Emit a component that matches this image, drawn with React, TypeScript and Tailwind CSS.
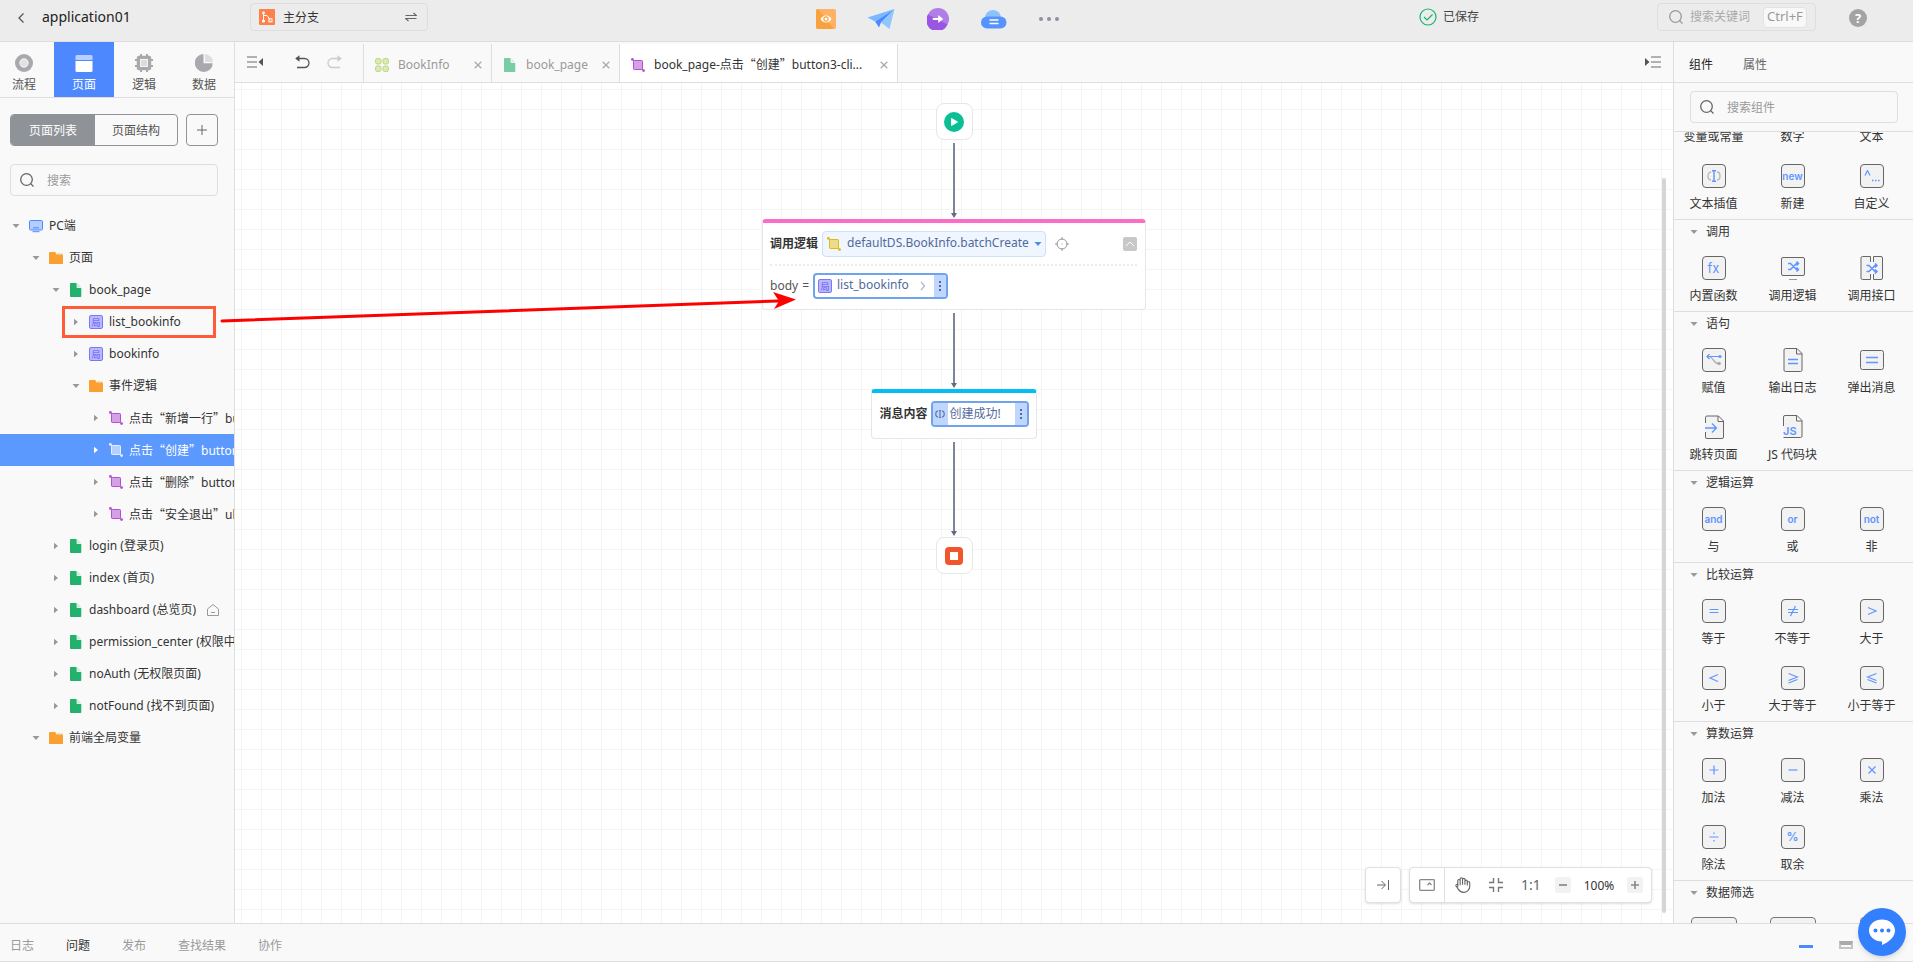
import { useState } from "react";
import type { ReactNode } from "react";
import clsx from "clsx";

/* ---------- shared icons ---------- */

function SearchIcon({ className }: { className?: string }) {
  return (
    <svg viewBox="0 0 16 16" fill="none" stroke="currentColor" strokeWidth="1.3" className={clsx("w-4 h-4 shrink-0", className)}>
      <circle cx="7.5" cy="7.5" r="5.8" />
      <path d="M11.6 11.6 14.5 14.5" />
    </svg>
  );
}

function PageIcon({ className }: { className?: string }) {
  return (
    <svg viewBox="0 0 14 14" className={clsx("w-3.5 h-3.5 shrink-0", className)}>
      <path d="M8.3 0 12.3 4.5H8.3Z" fill="#c5ead8" />
      <path d="M1.8 0H7.6V4a1 1 0 0 0 1 1h3.7v8.2a.8.8 0 0 1-.8.8H1.8a.8.8 0 0 1-.8-.8V.8A.8.8 0 0 1 1.8 0Z" fill="#23b26d" />
    </svg>
  );
}

function FolderIcon() {
  return (
    <svg viewBox="0 0 14 14" className="w-3.5 h-3.5 shrink-0">
      <path d="M8 2.2h5a.8.8 0 0 1 .8.8v3H8Z" fill="#fdd09a" />
      <path d="M.8 1h5.4l1.6 2.7h5.4a.8.8 0 0 1 .8.8v7.7a.8.8 0 0 1-.8.8H.8a.8.8 0 0 1-.8-.8V1.8A.8.8 0 0 1 .8 1Z" fill="#fb9f31" />
    </svg>
  );
}

function ScreenIcon() {
  return (
    <svg viewBox="0 0 14 14" className="w-3.5 h-3.5 shrink-0">
      <rect x=".5" y="1.5" width="13" height="9.5" rx="1.2" fill="#b3cdff" stroke="#4d88ff" />
      <path d="M4 8.8h6M3.5 12.7h7" stroke="#4d88ff" />
    </svg>
  );
}

function LogicIcon({ tone = "purple", className }: { tone?: "purple" | "yellow" | "white"; className?: string }) {
  const colors = {
    purple: ["#b14fd3", "#d5a0e6"],
    yellow: ["#e0b911", "#eedb85"],
    white: ["#e6efff", "#b4d0ff"],
  }[tone];
  return (
    <svg viewBox="0 0 14 14" className={clsx("w-3.5 h-3.5 shrink-0", className)}>
      <rect x="2.5" y="2.5" width="9" height="9" rx=".8" fill={colors[1]} stroke={colors[0]} />
      <path d="M1 1l2 2M11 11l2 2" stroke={colors[0]} />
      <circle cx="1.4" cy="1.4" r="1.4" fill={colors[0]} />
      <circle cx="12.6" cy="12.6" r="1.4" fill={colors[0]} />
    </svg>
  );
}

function LocalIcon() {
  return (
    <span className="flex items-center justify-center w-3.5 h-3.5 shrink-0 rounded-xs border border-[#7b77fb] bg-[#bbb8ff] text-[9px] leading-none text-[#5f5bf0]">
      局
    </span>
  );
}

function Caret({ open, className }: { open?: boolean; className?: string }) {
  return (
    <svg viewBox="0 0 8 8" fill="currentColor" className={clsx("w-2 h-2 shrink-0", className)}>
      {open ? <path d="M.5 2h7L4 6Z" /> : <path d="M2 .8v6.4L6 4Z" />}
    </svg>
  );
}

function CloseIcon() {
  return (
    <svg viewBox="0 0 8 8" stroke="currentColor" strokeWidth="1.3" className="w-2 h-2">
      <path d="M.7.7 7.3 7.3M7.3.7.7 7.3" />
    </svg>
  );
}

/* ---------- header ---------- */

function Header() {
  return (
    <header className="flex items-start h-[42px] shrink-0 bg-[#ececec] border-b border-[#dcdcdc]">
      <div className="flex flex-1 items-start">
        <button aria-label="返回" className="ml-4 mt-3 text-[#555]">
          <svg viewBox="0 0 12 12" fill="none" stroke="currentColor" strokeWidth="1.3" className="w-3 h-3">
            <path d="M7.5 1.5 3 6l4.5 4.5" />
          </svg>
        </button>
        <h1 className="ml-3.5 mt-[7px] w-52 text-sm text-[#222]">application01</h1>
        <button className="flex items-center mt-[3px] w-[178px] h-7 px-2 rounded border border-[#dedede] text-[#333]">
          <svg viewBox="0 0 16 16" className="w-4 h-4">
            <rect width="16" height="16" rx="1" fill="#ff8048" />
            <g fill="none" stroke="#fff">
              <path d="M4.5 4v8M4.5 6.5h3.5l3 4" />
              <rect x="10" y="9.8" width="3" height="3" />
            </g>
            <circle cx="4.5" cy="4" r="1.4" fill="#fff" />
            <circle cx="4.5" cy="12" r="1.6" fill="#fff" />
          </svg>
          <span className="ml-2 mr-auto pt-0.5">主分支</span>
          <svg viewBox="0 0 12 10" fill="none" stroke="#666" strokeWidth="1.2" className="w-3 h-2.5 mr-0.5">
            <path d="M.5 3.5h11L8.5 1M11.5 6.5H.5L3.5 9" />
          </svg>
        </button>
      </div>

      <div className="flex items-center h-[38px] pr-[38px]">
        <button aria-label="预览">
          <svg viewBox="0 0 20 20" className="w-5 h-5">
            <rect width="20" height="20" rx="2" fill="#ffb266" />
            <path d="M2 0 18 20H2a2 2 0 0 1-2-2V2a2 2 0 0 1 2-2Z" fill="#f7a23c" />
            <path d="M4.5 10c2.5-4.7 8.500-4.7 11 0-2.5 4.7-8.5 4.7-11 0Z" fill="#fff" />
            <circle cx="10" cy="10" r="2.1" fill="none" stroke="#f7a23c" strokeWidth="1.2" />
          </svg>
        </button>
        <button aria-label="发布" className="ml-[31px]">
          <svg viewBox="0 0 28 22" className="w-7 h-[22px]">
            <path d="M27.5 1 .5 9.5l7.7 4Z" fill="#7ab8ff" />
            <path d="M27.5 1 8.2 13.5 12 19.5l2-5Z" fill="#4d88ff" />
            <path d="M27.5 1 14 14.5l8.5 6.5Z" fill="#8fc6ff" />
          </svg>
        </button>
        <button aria-label="导出" className="ml-8">
          <svg viewBox="0 0 22 22" className="w-[22px] h-[22px]">
            <circle cx="11" cy="11" r="11" fill="#b07ee6" />
            <path d="M1 6.5 20.5 16.5A11 11 0 1 1 1 6.5Z" fill="#9a55e2" />
            <path d="M5.8 10h5.4V7l5 4-5 4v-3H5.8Z" fill="#fff" />
          </svg>
        </button>
        <button aria-label="云服务" className="ml-8">
          <svg viewBox="0 0 26 20" className="w-[26px] h-5">
            <circle cx="12" cy="9" r="8" fill="#8cc3ff" />
            <rect y="7.5" width="25.5" height="12" rx="6" fill="#5593ff" />
            <path d="M8.5 11h9M8.5 14.5h9" stroke="#fff" strokeWidth="1.6" />
          </svg>
        </button>
        <button aria-label="更多" className="flex gap-1 ml-8">
          <span className="w-1 h-1 rounded-full bg-[#8b92a3]" />
          <span className="w-1 h-1 rounded-full bg-[#8b92a3]" />
          <span className="w-1 h-1 rounded-full bg-[#8b92a3]" />
        </button>
      </div>

      <div className="flex flex-1 items-start justify-end">
        <div className="flex items-center gap-1.5 mt-2 mr-[178px] text-[#444]">
          <svg viewBox="0 0 18 18" fill="none" stroke="#18b36b" strokeWidth="1.2" className="w-[18px] h-[18px]">
            <circle cx="9" cy="9" r="8" />
            <path d="m5 9 3 3 5.5-5.5" />
          </svg>
          已保存
        </div>
        <label className="flex items-center mt-[3px] w-[159px] h-7 px-2.5 rounded border border-[#dedede] text-[#999]">
          <SearchIcon />
          <input aria-label="搜索关键词" placeholder="搜索关键词" className="w-[73px] ml-1.5 bg-transparent outline-none placeholder:text-[#aaa]" />
          <kbd className="flex items-center h-[21px] px-[3px] rounded border border-[#e2e2e2] bg-[#f8f8f8] font-[inherit] text-[13px]">Ctrl+F</kbd>
        </label>
        <button aria-label="帮助" className="flex items-center justify-center w-[18px] h-[18px] mt-[9px] ml-[33px] mr-[46px] rounded-full bg-[#a3a3a3] text-[13px] font-bold leading-none text-white">
          ?
        </button>
      </div>
    </header>
  );
}

/* ---------- left sidebar ---------- */

const sideTabs: { label: string; icon: ReactNode }[] = [
  {
    label: "流程",
    icon: (
      <>
        <circle cx="9" cy="9" r="9" fill="#a8a9ac" />
        <circle cx="9" cy="9" r="4.2" fill="#e2e2e2" stroke="#fff" strokeWidth=".8" />
      </>
    ),
  },
  {
    label: "页面",
    icon: (
      <>
        <path d="M2 1h14a1.5 1.5 0 0 1 1.5 1.5V6H.5V2.5A1.5 1.5 0 0 1 2 1Z" fill="#b8d0ff" />
        <path d="M.5 7h17v9.5a1.5 1.5 0 0 1-1.5 1.5H2a1.5 1.5 0 0 1-1.5-1.5Z" fill="#fff" />
      </>
    ),
  },
  {
    label: "逻辑",
    icon: (
      <>
        <path d="M6 0v18M12 0v18M0 6h18M0 12h18" stroke="#a8a9ac" strokeWidth="2" />
        <rect x="1.8" y="1.8" width="14.4" height="14.4" rx="2" fill="#a8a9ac" />
        <rect x="5.5" y="5.5" width="7" height="7" fill="#dcdcdc" stroke="#f5f5f5" />
      </>
    ),
  },
  {
    label: "数据",
    icon: (
      <>
        <path d="M8.5 0A9 9 0 1 0 17.8 9.3H8.5Z" fill="#a8a9ac" />
        <path d="M10 0a8.5 8.5 0 0 1 8 8h-8Z" fill="#dedede" />
      </>
    ),
  },
];

type TreeNode = {
  level: number;
  icon: "screen" | "folder" | "page" | "local" | "logic";
  text: ReactNode;
  open?: boolean;
  active?: boolean;
  marked?: boolean;
  home?: boolean;
};

// quotes take a full cell in the CJK face
function EventName({ name, target }: { name: string; target: string }) {
  return (
    <>
      <span className="font-['Noto_Sans_CJK_SC',sans-serif]">点击“{name}”</span>
      {target}
    </>
  );
}

const tree: TreeNode[] = [
  { level: 0, icon: "screen", text: "PC端", open: true },
  { level: 1, icon: "folder", text: "页面", open: true },
  { level: 2, icon: "page", text: "book_page", open: true },
  { level: 3, icon: "local", text: "list_bookinfo", marked: true },
  { level: 3, icon: "local", text: "bookinfo" },
  { level: 3, icon: "folder", text: "事件逻辑", open: true },
  { level: 4, icon: "logic", text: <EventName name="新增一行" target="bu" /> },
  { level: 4, icon: "logic", text: <EventName name="创建" target="button" />, active: true },
  { level: 4, icon: "logic", text: <EventName name="删除" target="button" /> },
  { level: 4, icon: "logic", text: <EventName name="安全退出" target="ul" /> },
  { level: 2, icon: "page", text: "login (登录页)" },
  { level: 2, icon: "page", text: "index (首页)" },
  { level: 2, icon: "page", text: "dashboard (总览页)", home: true },
  { level: 2, icon: "page", text: "permission_center (权限中" },
  { level: 2, icon: "page", text: "noAuth (无权限页面)" },
  { level: 2, icon: "page", text: "notFound (找不到页面)" },
  { level: 1, icon: "folder", text: "前端全局变量", open: true },
];

const indents = ["pl-3", "pl-8", "pl-[52px]", "pl-[72px]", "pl-[92px]"];

function TreeRow({ node }: { node: TreeNode }) {
  return (
    <li className="relative">
      <button
        className={clsx(
          "flex items-center w-full h-8 overflow-hidden whitespace-nowrap text-left",
          indents[node.level],
          node.active ? "bg-[#5c99ff] text-white" : "text-[#333]"
        )}
      >
        <Caret open={node.open} className={clsx("mr-[9px]", node.active ? "text-white" : "text-[#999]")} />
        {node.icon === "screen" && <ScreenIcon />}
        {node.icon === "folder" && <FolderIcon />}
        {node.icon === "page" && <PageIcon />}
        {node.icon === "local" && <LocalIcon />}
        {node.icon === "logic" && <LogicIcon tone={node.active ? "white" : "purple"} />}
        <span className="ml-1.5">{node.text}</span>
        {node.home && (
          <svg viewBox="0 0 14 14" fill="none" stroke="#999" className="w-3.5 h-3.5 ml-2.5 shrink-0">
            <path d="M1.5 6 7 1.5 12.5 6v6.5h-11ZM5 9.5h4" />
          </svg>
        )}
      </button>
      {node.marked && <span className="absolute top-0 left-[62px] w-[154px] h-8 border-3 border-[#ff5b38] pointer-events-none" />}
    </li>
  );
}

function Sidebar() {
  return (
    <aside className="flex flex-col w-[235px] shrink-0 bg-[#f9f9f9] border-r border-[#dedede]">
      <nav className="flex border-b border-[#dedede]">
        {sideTabs.map((tab, i) => (
          <button
            key={tab.label}
            className={clsx(
              "flex flex-col items-center h-[55px] pt-3",
              i === 0 ? "w-[54px] pr-1.5" : "w-15",
              i === 1 ? "bg-[#4d88ff] text-white" : "text-[#555]"
            )}
          >
            <svg viewBox="0 0 18 18" className="w-[18px] h-[18px]">
              {tab.icon}
            </svg>
            <span className="mt-[5px]">{tab.label}</span>
          </button>
        ))}
      </nav>

      <div className="flex gap-2 px-2.5 pt-4">
        <div className="flex w-[168px] h-8 rounded border border-[#8f9398] overflow-hidden">
          <button className="w-[84px] pt-px bg-[#8f9398] text-white">页面列表</button>
          <button className="flex-1 pt-px text-[#555]">页面结构</button>
        </div>
        <button aria-label="新建页面" className="flex items-center justify-center w-8 h-8 rounded border border-[#8f9398] text-[#666]">
          <svg viewBox="0 0 10 10" stroke="currentColor" className="w-2.5 h-2.5">
            <path d="M5 0v10M0 5h10" />
          </svg>
        </button>
      </div>

      <label className="flex items-center gap-3 h-8 mx-2.5 mt-[18px] w-[208px] px-2 rounded border border-[#dedede] text-[#666]">
        <SearchIcon />
        <input aria-label="搜索" placeholder="搜索" className="flex-1 min-w-0 pt-px bg-transparent outline-none placeholder:text-[#999]" />
      </label>

      <ul className="mt-3.5">
        {tree.map((node, i) => (
          <TreeRow key={i} node={node} />
        ))}
      </ul>
    </aside>
  );
}

/* ---------- editor ---------- */

function EditorBar() {
  return (
    <div className="flex items-end h-[41px] shrink-0 bg-[#f9f9f9] border-b border-[#dedede]">
      <div className="flex items-center self-stretch w-32 pl-3 text-[#666]">
        <button aria-label="收起左侧栏">
          <svg viewBox="0 0 16 14" className="w-4 h-3.5">
            <path d="M0 2h10M0 7h10M0 12h10" stroke="#999" strokeWidth="1.6" />
            <path d="M16 3v8L11.5 7Z" fill="#555" />
          </svg>
        </button>
        <button aria-label="撤销" className="ml-8">
          <svg viewBox="0 0 15 14" fill="none" stroke="#555" strokeWidth="1.3" className="w-[15px] h-3.5">
            <path d="M1 3.5h8.5a4.2 4.2 0 0 1 0 9H2" />
            <path d="M4.500.2v6.6L.2 3.5Z" fill="#555" stroke="none" />
          </svg>
        </button>
        <button aria-label="重做" className="ml-[17px]">
          <svg viewBox="0 0 15 14" fill="none" stroke="#ccc" strokeWidth="1.3" className="w-[15px] h-3.5">
            <path d="M14 3.5H5.5a4.2 4.2 0 0 0 0 9H13" />
            <path d="M10.500.2v6.6L14.8 3.5Z" fill="#ccc" stroke="none" />
          </svg>
        </button>
      </div>
      <div className="flex h-[38px] border-l border-[#dedede]">
        <div className="flex items-center w-32 pt-[3px] pl-[11px] pr-[9px] border-r border-[#dedede] text-[#999]">
          <svg viewBox="0 0 14 14" fill="#dbe9b8" stroke="#bcd57f" className="w-3.5 h-3.5">
            <rect x=".5" y=".5" width="5.5" height="5.5" rx="1.8" />
            <rect x="8" y=".5" width="5.5" height="5.5" rx="1.8" />
            <rect x=".5" y="8" width="5.5" height="5.5" rx="1.8" />
            <rect x="8" y="8" width="5.5" height="5.5" rx="1.8" />
          </svg>
          <span className="ml-[9px] mr-auto">BookInfo</span>
          <button aria-label="关闭 BookInfo" className="text-[#aaa]"><CloseIcon /></button>
        </div>
        <div className="flex items-center w-32 pt-[3px] pl-[11px] pr-[9px] border-r border-[#dedede] text-[#999]">
          <PageIcon className="opacity-60" />
          <span className="ml-[9px] mr-auto">book_page</span>
          <button aria-label="关闭 book_page" className="text-[#aaa]"><CloseIcon /></button>
        </div>
        <div className="flex items-center w-[278px] pt-[3px] pl-[11px] pr-[9px] border-r border-[#dedede] bg-white text-[#333]">
          <LogicIcon />
          <span className="ml-[9px] mr-auto whitespace-nowrap">
            book_page-<span className="font-['Noto_Sans_CJK_SC',sans-serif]">点击“创建”</span>button3-cli...
          </span>
          <button aria-label="关闭标签" className="text-[#aaa]"><CloseIcon /></button>
        </div>
      </div>
      <button aria-label="收起右侧栏" className="self-center ml-auto mr-3">
        <svg viewBox="0 0 16 14" className="w-4 h-3.5">
          <path d="M6 2h10M6 7h10M6 12h10" stroke="#999" strokeWidth="1.6" />
          <path d="M0 3v8L4.5 7Z" fill="#555" />
        </svg>
      </button>
    </div>
  );
}

function Arrow({ className }: { className: string }) {
  return (
    <div className={clsx("flex flex-col items-center mt-[3px] mb-px", className)}>
      <div className="flex-1 w-0.5 bg-[#7d8696]" />
      <svg viewBox="0 0 6 5" className="w-1.5 h-[5px]">
        <path d="M0 0h6L3 5Z" fill="#626b80" />
      </svg>
    </div>
  );
}

function Dots() {
  return (
    <span className="flex flex-col items-center justify-center gap-0.5 w-3 self-stretch bg-[#bfd7ff]">
      <span className="w-0.5 h-0.5 bg-[#516a9c]" />
      <span className="w-0.5 h-0.5 bg-[#516a9c]" />
      <span className="w-0.5 h-0.5 bg-[#516a9c]" />
    </span>
  );
}

function Canvas() {
  return (
    <div className="relative flex flex-1 flex-col items-center min-h-0 pt-5 overflow-hidden bg-white bg-[linear-gradient(#f4f4f4_1px,transparent_1px),linear-gradient(90deg,#f4f4f4_1px,transparent_1px)] bg-[size:20px_20px] bg-[position:6px_6px]">
      <div className="flex items-center justify-center w-[37px] h-[37px] rounded-lg border border-[#e6e6e6] bg-white">
        <svg viewBox="0 0 20 20" className="w-5 h-5">
          <circle cx="10" cy="10" r="10" fill="#0bbf95" />
          <path d="M7.5 6.5v7L13.5 10Z" fill="#fff" stroke="#fff" strokeLinejoin="round" />
        </svg>
      </div>
      <Arrow className="h-[75px]" />

      <section className="w-96 pl-[7px] pr-2 pt-2 pb-2.5 rounded border border-t-4 border-[#e6e6e6] border-t-[#fb6dc8] bg-white">
        <div className="flex items-center">
          <label htmlFor="logic" className="font-bold text-[#333]">调用逻辑</label>
          <div className="relative flex items-center ml-1">
            <LogicIcon tone="yellow" className="absolute left-[5px]" />
            <select
              id="logic"
              className="w-56 h-[26px] pl-6 pr-4 pb-0.5 appearance-none rounded border border-[#cfe0fb] bg-[#f0f6ff] text-[#516a9c] outline-none"
            >
              <option>defaultDS.BookInfo.batchCreate</option>
            </select>
            <Caret open className="absolute right-1 text-[#4a90e2]" />
          </div>
          <button aria-label="定位" className="ml-[9px]">
            <svg viewBox="0 0 14 14" fill="none" stroke="#999" className="w-3.5 h-3.5">
              <circle cx="7" cy="7" r="5" />
              <path d="M7 0v3M7 11v3M0 7h3M11 7h3M6.5 7h1" />
            </svg>
          </button>
          <button aria-label="收起" className="flex items-center justify-center w-3.5 h-3.5 ml-auto rounded-xs bg-[#c8c8c8]">
            <svg viewBox="0 0 10 6" fill="none" stroke="#fff" className="w-2.5 h-1.5">
              <path d="M.8 5 5 1l4.2 4" />
            </svg>
          </button>
        </div>
        <div className="my-[7px] border-t-2 border-dotted border-[#ebebeb]" />
        <div className="flex items-center text-[#555]">
          <span className="flex gap-1 w-[43px]">
            <span>body</span>
            <span>=</span>
          </span>
          <button className="flex items-center w-[135px] h-[26px] pl-[3px] rounded border-2 border-[#6fa3ee] bg-white overflow-hidden text-[#516a9c]">
            <LocalIcon />
            <span className="ml-[5px] mr-auto pb-0.5">list_bookinfo</span>
            <svg viewBox="0 0 6 10" fill="none" stroke="#a9b8d3" strokeWidth="1.3" className="w-1.5 h-2.5 mr-2">
              <path d="M1 .8 4.5 5 1 9.2" />
            </svg>
            <Dots />
          </button>
        </div>
      </section>
      <Arrow className="h-[75px]" />

      <section className="flex items-center gap-[3px] px-[7px] pt-2 pb-[11px] rounded border border-t-4 border-[#e6e6e6] border-t-[#05bdf5] bg-white">
        <span className="font-bold text-[#333]">消息内容</span>
        <button className="flex items-center w-[98px] h-[26px] rounded border-2 border-[#6fa3ee] bg-white overflow-hidden text-[#516a9c]">
          <span className="flex items-center justify-center w-[15px] self-stretch bg-[#bfd7ff]">
            <svg viewBox="0 0 10 8" fill="none" stroke="#6079ad" strokeWidth="1.2" className="w-2.5 h-2">
              <path d="M3 .8C0 1.5 0 6.5 3 7.2M7 .8c3 .7 3 5.7 0 6.4M5 0v8M4 .5h2M4 7.5h2" />
            </svg>
          </span>
          <span className="ml-0.5 mr-auto">创建成功!</span>
          <Dots />
        </button>
      </section>
      <Arrow className="h-[94px]" />
      <div className="flex items-center justify-center w-[37px] h-[37px] rounded-lg border border-[#e6e6e6] bg-white">
        <div className="w-[18px] h-[18px] rounded border-5 border-[#f2552c] bg-white" />
      </div>

      {/* scrollbar */}
      <div className="absolute top-[95px] bottom-2.5 right-[7px] w-1 rounded-full bg-[#d5d5d5]" />

      <CanvasTools />
    </div>
  );
}

function CanvasTools() {
  return (
    <div className="absolute bottom-5 right-[21px] flex gap-2 text-[#666]">
      <button aria-label="展开" className="flex items-center justify-center w-9 h-9 rounded border border-[#e0e0e0] bg-white shadow-sm">
        <svg viewBox="0 0 14 12" fill="none" stroke="currentColor" className="w-3.5 h-3">
          <path d="M1 6h8M5.5 2l4 4-4 4M12.5 1v10" />
        </svg>
      </button>
      <div className="flex items-center h-9 w-[243px] rounded border border-[#e0e0e0] bg-white shadow-sm">
        <button aria-label="缩略图" className="flex items-center justify-center w-[35px] h-full border-r border-[#e0e0e0]">
          <svg viewBox="0 0 16 12" fill="none" stroke="#888" strokeWidth="1.3" className="w-4 h-3">
            <rect x=".7" y=".7" width="14.6" height="10.6" rx=".8" />
            <path d="m8.5 6 2-2 2 2" />
          </svg>
        </button>
        <button aria-label="拖动" className="ml-2.5">
          <svg viewBox="0 0 24 24" fill="none" stroke="currentColor" strokeWidth="1.7" strokeLinecap="round" strokeLinejoin="round" className="w-4 h-4">
            <path d="M18.5 12V6.5a1.8 1.8 0 0 0-3.6 0M14.9 11V3.8a1.8 1.8 0 0 0-3.6 0V11M11.3 11V3a1.8 1.8 0 0 0-3.6 0v8.5M7.7 11V5.5a1.8 1.8 0 0 0-3.6 0V15" />
            <path d="M18.5 8.5a1.8 1.8 0 0 1 3.6 0V14a9 9 0 0 1-9 9c-4 0-6-1.5-8-4.5l-3.6-5a1.7 1.7 0 0 1 2.6-2" />
          </svg>
        </button>
        <button aria-label="适应画布" className="ml-[17px]">
          <svg viewBox="0 0 16 16" fill="none" stroke="#777" strokeWidth="1.4" className="w-4 h-4">
            <path d="M1 5.5H5.5V1M15 5.5H10.5V1M1 10.5H5.5V15M15 10.5H10.5V15" />
          </svg>
        </button>
        <button className="ml-[17px] w-[18px] text-sm leading-4">1:1</button>
        <button aria-label="缩小" className="flex items-center justify-center w-4 h-4 ml-4 rounded-xs bg-[#f2f2f2]">
          <span className="w-2 h-0.5 bg-[#999]" />
        </button>
        <span className="w-14 pt-px text-center text-[#333]">100%</span>
        <button aria-label="放大" className="flex items-center justify-center w-4 h-4 rounded-xs bg-[#f2f2f2]">
          <svg viewBox="0 0 8 8" stroke="#888" strokeWidth="1.6" className="w-2 h-2">
            <path d="M4 0v8M0 4h8" />
          </svg>
        </button>
      </div>
    </div>
  );
}

/* ---------- right panel ---------- */

const line = "#5f95ff";

function Tile({ children }: { children: ReactNode }) {
  return (
    <span className="flex items-center justify-center w-6 h-6 rounded border border-[#666] bg-[#f2f2f2] font-[Inter,sans-serif] text-[10px] leading-none font-semibold text-[#5f95ff]">
      {children}
    </span>
  );
}

function Sign({ d }: { d: string }) {
  return (
    <Tile>
      <svg viewBox="0 0 12 12" fill="none" stroke={line} strokeWidth="1.2" className="w-3 h-3">
        <path d={d} />
      </svg>
    </Tile>
  );
}

function Drawing({ children }: { children: ReactNode }) {
  return (
    <svg viewBox="0 0 24 24" fill="#f2f2f2" stroke="#666" className="w-6 h-6">
      {children}
    </svg>
  );
}

const shuffle = (
  <path d="M7 7.5h2.5l6 6H18M7 13.5h2.5l6-6H18M15.5 5.5l2 2-2 2M15.5 11.5l2 2-2 2" fill="none" stroke={line} strokeWidth="1.5" />
);

type Item = { label: string; icon: ReactNode };

const groups: { title?: string; items: Item[] }[] = [
  {
    items: [
      {
        label: "文本插值",
        icon: (
          <Tile>
            <svg viewBox="0 0 14 12" fill="none" className="w-3.5 h-3">
              <path d="M4 2C0 2 0 10 4 10M10 2c4 0 4 8 0 8" stroke="#b5b5b5" strokeWidth="1.3" />
              <path d="M7 1v10M5 .7h4M5 11.3h4" stroke={line} strokeWidth="1.4" />
            </svg>
          </Tile>
        ),
      },
      { label: "新建", icon: <Tile>new</Tile> },
      {
        label: "自定义",
        icon: (
          <Tile>
            <svg viewBox="0 0 16 12" fill="none" stroke={line} className="w-4 h-3">
              <path d="m1 5.5 2.5-5 2.5 5" strokeWidth="1.2" />
              <path d="M8 10.5h8" strokeWidth="1.5" strokeDasharray="1.5 1.5" />
            </svg>
          </Tile>
        ),
      },
    ],
  },
  {
    title: "调用",
    items: [
      { label: "内置函数", icon: <Tile><span className="text-[13px] font-normal">fx</span></Tile> },
      {
        label: "调用逻辑",
        icon: (
          <Drawing>
            <rect x=".5" y="1.5" width="23" height="18" rx="1.5" />
            <path d="M8 23.5h8" stroke="#999" />
            {shuffle}
          </Drawing>
        ),
      },
      {
        label: "调用接口",
        icon: (
          <Drawing>
            <path d="M10.5 6V.5h-8A1.5 1.5 0 0 0 1 2v20a1.5 1.5 0 0 0 1.5 1.5h8V18M13.5 6V.5H21A1.5 1.5 0 0 1 22.5 2v20a1.5 1.5 0 0 1-1.5 1.5h-7.5V18" />
            <g transform="translate(-.5 2)">{shuffle}</g>
          </Drawing>
        ),
      },
    ],
  },
  {
    title: "语句",
    items: [
      {
        label: "赋值",
        icon: (
          <Tile>
            <svg viewBox="0 0 16 12" fill="none" className="w-4 h-3">
              <path d="M3 2.5c4 0 4.5 7 9 7" stroke="#aaa" strokeWidth="1.2" />
              <circle cx="13" cy="9.5" r="1.8" fill="#aaa" />
              <path d="M13 2.5H1M3.5 0 1 2.5 3.5 5" stroke={line} strokeWidth="1.2" />
              <circle cx="14" cy="2.5" r="1.5" fill={line} />
            </svg>
          </Tile>
        ),
      },
      {
        label: "输出日志",
        icon: (
          <Drawing>
            <path d="M16 .5H4.5A1.5 1.5 0 0 0 3 2v20a1.5 1.5 0 0 0 1.5 1.5h15A1.5 1.5 0 0 0 21 22V5.5ZM15.5.5V6H21" />
            <path d="M7 11.5h10M7 15.5h10" stroke={line} strokeWidth="1.3" />
          </Drawing>
        ),
      },
      {
        label: "弹出消息",
        icon: (
          <Drawing>
            <rect x=".5" y="2.5" width="23" height="19" rx="2" />
            <path d="M6 9.5h12M6 14.5h12" stroke={line} strokeWidth="1.3" />
          </Drawing>
        ),
      },
      {
        label: "跳转页面",
        icon: (
          <Drawing>
            <path d="M3.5 8V2.5A1.5 1.5 0 0 1 5 1h11.5l5 5v16a1.5 1.5 0 0 1-1.5 1.5H5A1.5 1.5 0 0 1 3.5 22v-5M16 1v5.5h5.5" />
            <path d="M3 13h11M10 8.5l4.5 4.5-4.5 4.5" fill="none" stroke={line} strokeWidth="1.3" />
          </Drawing>
        ),
      },
      {
        label: "JS 代码块",
        icon: (
          <Drawing>
            <path d="M2.5 11V2A1.5 1.5 0 0 1 4 .5h12l5 5V21a1.5 1.5 0 0 1-1.5 1.5H2.5M15.5.5V6H21" />
            <text x="2" y="20" fontSize="11" fontWeight="600" fontFamily="Inter, sans-serif" fill={line} stroke="none">JS</text>
          </Drawing>
        ),
      },
    ],
  },
  {
    title: "逻辑运算",
    items: [
      { label: "与", icon: <Tile>and</Tile> },
      { label: "或", icon: <Tile>or</Tile> },
      { label: "非", icon: <Tile>not</Tile> },
    ],
  },
  {
    title: "比较运算",
    items: [
      { label: "等于", icon: <Sign d="M1.5 4.5h9M1.5 7.5h9" /> },
      { label: "不等于", icon: <Sign d="M1 4.5h10M1 7.5h10M8.5 1l-5 10" /> },
      { label: "大于", icon: <Sign d="M2 2.5 10 6 2 9.5" /> },
      { label: "小于", icon: <Sign d="M10 2.5 2 6l8 3.5" /> },
      { label: "大于等于", icon: <Sign d="M1.5 1.5 10.5 5 1.5 8.5M10.5 7.5l-9 3.5" /> },
      { label: "小于等于", icon: <Sign d="M10.5 1.5 1.5 5l9 3.5M1.5 7.5l9 3.5" /> },
    ],
  },
  {
    title: "算数运算",
    items: [
      { label: "加法", icon: <Sign d="M6 1.5v9M1.5 6h9" /> },
      { label: "减法", icon: <Sign d="M1.5 6h9" /> },
      { label: "乘法", icon: <Sign d="M2.5 2.5l7 7M9.5 2.5l-7 7" /> },
      { label: "除法", icon: <Sign d="M1.5 6h9M6 1.5V3M6 9v1.5" /> },
      { label: "取余", icon: <Tile><span className="text-xs leading-none">%</span></Tile> },
    ],
  },
];

function GroupTitle({ children }: { children: ReactNode }) {
  return (
    <h3 className="flex items-center h-6 pl-4 text-[#333]">
      <Caret open className="mr-2 text-[#999]" />
      {children}
    </h3>
  );
}

function Palette() {
  return (
    <aside className="flex flex-col w-60 shrink-0 min-h-0 bg-[#f9f9f9] border-l border-[#dedede]">
      <nav className="flex items-center gap-[30px] h-[41px] shrink-0 pt-1.5 pl-[15px] border-b border-[#dedede]">
        <button className="text-[#222]">组件</button>
        <button className="text-[#666]">属性</button>
      </nav>
      <div className="shrink-0 pt-2 pb-2 px-4 border-b border-[#dedede]">
        <label className="flex items-center gap-3 w-[208px] h-8 px-2 rounded border border-[#dedede] text-[#666]">
          <SearchIcon />
          <input aria-label="搜索组件" placeholder="搜索组件" className="flex-1 min-w-0 pt-px bg-transparent outline-none placeholder:text-[#999]" />
        </label>
      </div>
      <div className="flex-1 min-h-0 pr-[2px] overflow-hidden text-[#333]">
        <div className="grid grid-cols-3 -mt-[3px] pb-[7px] text-center">
          <span>变量或常量</span>
          <span>数字</span>
          <span>文本</span>
        </div>
        {groups.map((group, i) => (
          <section key={i} className={clsx(group.title && "-mr-[2px] pr-[2px] border-t border-[#dedede]")}>
            {group.title && <GroupTitle>{group.title}</GroupTitle>}
            <div className="grid grid-cols-3">
              {group.items.map((item) => (
                <button key={item.label} className="flex flex-col items-center pt-3 pb-[7px]">
                  {item.icon}
                  <span className="mt-2">{item.label}</span>
                </button>
              ))}
            </div>
          </section>
        ))}
        <section className="-mr-[2px] pr-[2px] border-t border-[#dedede]">
          <GroupTitle>数据筛选</GroupTitle>
          <div className="grid grid-cols-3 justify-items-center pt-3">
            <span className="w-[46px] h-6 rounded border border-[#777] bg-[#f2f2f2]" />
            <span className="w-[46px] h-6 rounded border border-[#777] bg-[#f2f2f2]" />
            <span className="w-6 h-6 rounded border border-[#777] bg-[#f2f2f2]" />
          </div>
        </section>
      </div>
    </aside>
  );
}

/* ---------- bottom bar ---------- */

function BottomBar() {
  const [tab, setTab] = useState("问题");
  return (
    <footer className="relative flex items-center h-[39px] shrink-0 px-2.5 bg-[#f9f9f9] border-y border-[#dedede]">
      <div className="flex gap-8 pt-1.5">
        {["日志", "问题", "发布", "查找结果", "协作"].map((name) => (
          <button key={name} onClick={() => setTab(name)} className={tab === name ? "text-[#333]" : "text-[#999]"}>
            {name}
          </button>
        ))}
      </div>
      <button aria-label="最小化" className="ml-auto mt-2 mr-[26px] w-3.5 h-[3px] bg-[#4d88ff]" />
      <button aria-label="还原" className="w-3.5 h-2 mt-1 mr-[50px] border-2 border-t-4 border-[#c4c4c4] border-t-[#aaa]" />
      <button aria-label="在线客服" className="absolute right-[7px] bottom-[5px] flex items-center justify-center w-12 h-12 rounded-full bg-[#3380ff] shadow-md">
        <svg viewBox="0 0 26 26" className="w-[26px] h-[26px]">
          <path d="M13 .5C6 .5 0 5 0 11.5c0 6 5.5 11 13 11V26c7-3 13-8 13-14.5C26 5 20 .5 13 .5Z" fill="#fff" />
          <g fill="#3380ff">
            <circle cx="6.5" cy="11.5" r="2" />
            <circle cx="13" cy="11.5" r="2" />
            <circle cx="19.5" cy="11.5" r="2" />
          </g>
        </svg>
      </button>
    </footer>
  );
}

export default function App() {
  return (
    <div className="relative flex flex-col h-screen overflow-hidden font-['Noto_Sans','Noto_Sans_CJK_SC',sans-serif] text-xs">
      <Header />
      <div className="flex flex-1 min-h-0">
        <Sidebar />
        <main className="flex flex-1 flex-col min-w-0">
          <EditorBar />
          <Canvas />
        </main>
        <Palette />
      </div>
      <BottomBar />

      {/* red pointer from the tree to the body argument */}
      <svg viewBox="0 0 580 36" className="absolute left-[220px] top-[288px] w-[580px] h-9 pointer-events-none">
        <path d="M2 33 558 13" stroke="#f00" strokeWidth="3" strokeLinecap="round" />
        <path d="M576 11.5 553 4l6 9-5 8Z" fill="#f00" />
      </svg>
    </div>
  );
}
